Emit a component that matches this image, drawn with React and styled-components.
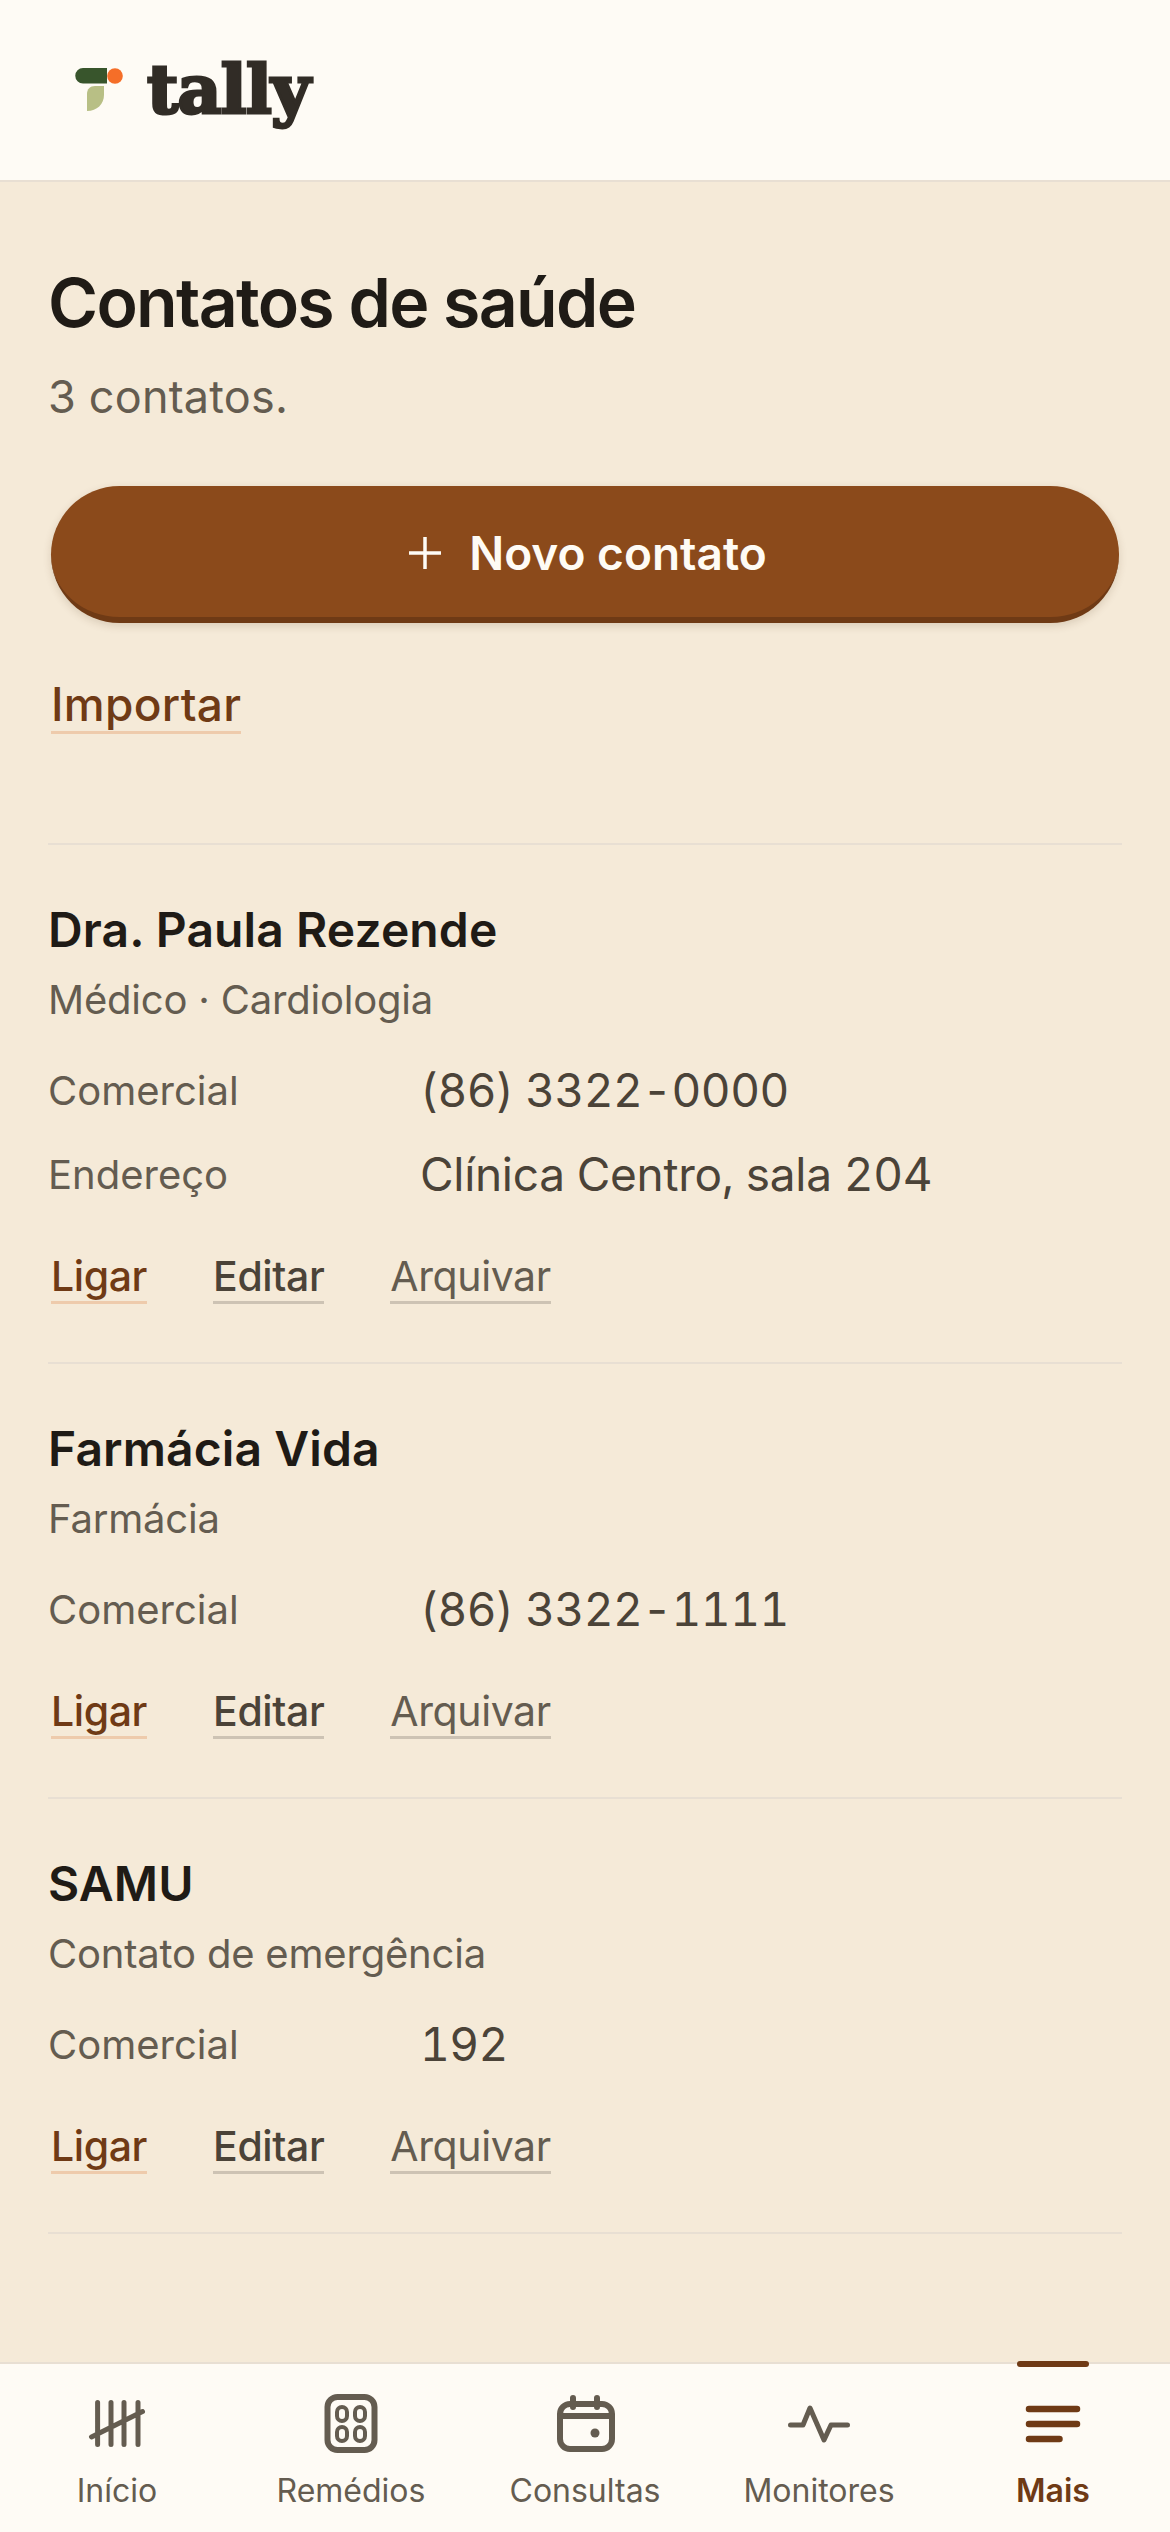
import React from "react";
import styled, { createGlobalStyle } from "styled-components";

const Global = createGlobalStyle`
  html, body { margin: 0; padding: 0; background: #f5ead8; }
  * { box-sizing: border-box; }
`;
const font = `Inter, "Noto Sans", sans-serif`;

const Page = styled.div`
  width: 1170px; height: 2532px; display: flex; flex-direction: column;
  background: #f5ead8; font-family: ${font}; overflow: hidden;
`;
const Header = styled.header`
  height: 182px; flex: none; background: #fefbf5; border-bottom: 2px solid #e8dfd3;
  display: flex; align-items: flex-start; padding: 61px 0 0 75px; gap: 16px;
`;
const Wordmark = styled.span`
  font-family: "DejaVu Serif", serif; font-weight: 700; font-size: 68px; line-height: 64px;
  color: #312c26; letter-spacing: -0.8px; -webkit-text-stroke: 3px #312c26; margin-top: -4px;
`;
const Main = styled.main`
  flex: 1; padding: 0 48px; display: flex; flex-direction: column;
`;
const Title = styled.h1`
  margin: 84px 0 0; font-size: 68px; line-height: 72px; font-weight: 600; letter-spacing: -1.7px; color: #1f1b16;
`;
const Sub = styled.p`
  margin: 34px 0 0; font-size: 45px; line-height: 50px; color: #645c50; letter-spacing: 0.2px;
`;
const Primary = styled.button`
  margin: 64px 3px 0; height: 137px; border: 0; border-bottom: 6px solid #6f3a15; border-radius: 69px;
  background: #8b4a1b; color: #fefbf5; font: 600 46px/1 ${font}; padding: 2px 0 0 6px;
  display: flex; align-items: center; justify-content: center; gap: 28px;
  box-shadow: 0 3px 8px rgba(80, 50, 20, .16);
`;
const Import = styled.a`
  align-self: flex-start; margin: 54px 0 0 3px; font-size: 46px; line-height: 54px; font-weight: 500;
  color: #6f3a15; border-bottom: 3px solid #eecbac; letter-spacing: 0.3px;
`;
const List = styled.div`
  margin-top: 109px; border-top: 2px solid #e8dfd3;
`;
const Contact = styled.section`
  padding: 55px 0 58px; border-bottom: 2px solid #e8dfd3;
`;
const Name = styled.h2`
  margin: 0; font-size: 48px; line-height: 60px; font-weight: 600; letter-spacing: 0.1px; color: #1f1b16;
`;
const Role = styled.p`
  margin: 15px 0 0; font-size: 40px; line-height: 50px; color: #645c50; letter-spacing: -0.2px;
`;
const Rows = styled.dl`
  margin: 23px 0 0;
`;
const Row = styled.div`
  display: grid; grid-template-columns: 372px 1fr; align-items: center; height: 84px;
`;
const Label = styled.dt`
  font-size: 40px; color: #645c50;
`;
const Value = styled.dd`
  margin: 0; font-size: 46px; color: #4b4338; font-variant-numeric: tabular-nums;
  letter-spacing: ${p => p.$num ? "-0.55px" : "-0.3px"};
`;
const Actions = styled.div`
  display: flex; gap: 66px; margin: 35px 0 0 3px;
`;
const Action = styled.a`
  font-size: 41px; line-height: 50px; letter-spacing: -0.4px;
  font-weight: ${p => p.$kind === "muted" ? 400 : 500};
  color: ${p => p.$kind === "primary" ? "#6f3a15" : p.$kind === "muted" ? "#645c50" : "#4b4338"};
  border-bottom: 3px solid ${p => p.$kind === "primary" ? "#eecbac" : "#cdc3b4"};
`;
const Nav = styled.nav`
  height: 170px; flex: none; background: #fefbf5; border-top: 2px solid #e8dfd3;
  display: grid; grid-template-columns: repeat(5, 234px);
`;
const Tab = styled.div`
  position: relative; display: flex; flex-direction: column; align-items: center;
  color: ${p => p.$active ? "#6f3a15" : "#645c50"};
`;
const Indicator = styled.span`
  position: absolute; top: -3px; left: 81px; width: 72px; height: 6px; border-radius: 3px; background: #6f3a15;
`;
const TabIcon = styled.svg`
  width: 72px; height: 72px; margin-top: 28px; flex: none;
  fill: none; stroke: currentColor; stroke-linecap: round; stroke-linejoin: round;
`;
const TabLabel = styled.span`
  margin-top: 7px; font-size: 32px; line-height: 40px; font-weight: ${p => p.$active ? 600 : 400};
`;

const Logo = () => (
  <svg width="56" height="52" viewBox="0 0 56 52" style={{ flex: "none", marginTop: 6 }}>
    <path d="M8 1h24v15.5H8a7.75 7.75 0 0 1 0-15.5z" fill="#38552c" />
    <circle cx="40" cy="9" r="7.8" fill="#f56e28" />
    <path d="M29 19v9c0 9-7 16-17 16V27c0-5 3-8 8-8z" fill="#b8bf85" />
  </svg>
);

const icons = {
  tally: <path d="M16.6 10.5v42M30 10.5v42M43 10.5v42M57 10.5v42M10.5 45l51-25.5" strokeWidth="5" />,
  pills: (
    <g>
      <rect x="12.5" y="5" width="47" height="53" rx="10" strokeWidth="6" />
      <rect x="22" y="15" width="10" height="14" rx="5" strokeWidth="4" />
      <rect x="40" y="15" width="10" height="14" rx="5" strokeWidth="4" />
      <rect x="22" y="35" width="10" height="14" rx="5" strokeWidth="4" />
      <rect x="40" y="35" width="10" height="14" rx="5" strokeWidth="4" />
    </g>
  ),
  calendar: (
    <g strokeWidth="6">
      <rect x="11" y="12" width="52" height="45" rx="10" />
      <path d="M11 24h52M24 6v9M48 6v9" />
      <circle cx="46" cy="41" r="4.5" fill="currentColor" stroke="none" />
    </g>
  ),
  pulse: <path d="M7.5 33H20l7-17 14 32 7-15h16.5" strokeWidth="5" />,
  more: <path d="M12 17h48M12 32h48M12 47h30.5" strokeWidth="6.5" />,
};

const Contacts = [
  { name: "Dra. Paula Rezende", role: "Médico · Cardiologia", rows: [["Comercial", "(86) 3322-0000", true], ["Endereço", "Clínica Centro, sala 204"]] },
  { name: "Farmácia Vida", role: "Farmácia", rows: [["Comercial", "(86) 3322-1111", true]] },
  { name: "SAMU", role: "Contato de emergência", rows: [["Comercial", "192", true]] },
];
const tabs = [
  ["tally", "Início"], ["pills", "Remédios"], ["calendar", "Consultas"], ["pulse", "Monitores"], ["more", "Mais", true],
];

export default function App() {
  return (
    <Page>
      <Global />
      <Header><Logo /><Wordmark>tally</Wordmark></Header>
      <Main>
        <Title>Contatos de saúde</Title>
        <Sub>3 contatos.</Sub>
        <Primary>
          <svg width="32" height="32" viewBox="0 0 32 32" fill="none" stroke="currentColor" strokeWidth="3.5"><path d="M16 0v32M0 16h32" /></svg>
          Novo contato
        </Primary>
        <Import>Importar</Import>
        <List>
          {Contacts.map(c => (
            <Contact key={c.name}>
              <Name>{c.name}</Name>
              <Role>{c.role}</Role>
              <Rows>
                {c.rows.map(([l, v, num]) => (
                  <Row key={l}><Label>{l}</Label><Value $num={num}>{v}</Value></Row>
                ))}
              </Rows>
              <Actions>
                <Action $kind="primary">Ligar</Action>
                <Action $kind="secondary">Editar</Action>
                <Action $kind="muted">Arquivar</Action>
              </Actions>
            </Contact>
          ))}
        </List>
      </Main>
      <Nav>
        {tabs.map(([icon, label, active]) => (
          <Tab key={label} $active={active}>
            {active && <Indicator />}
            <TabIcon viewBox="0 0 72 72">{icons[icon]}</TabIcon>
            <TabLabel $active={active}>{label}</TabLabel>
          </Tab>
        ))}
      </Nav>
    </Page>
  );
}
